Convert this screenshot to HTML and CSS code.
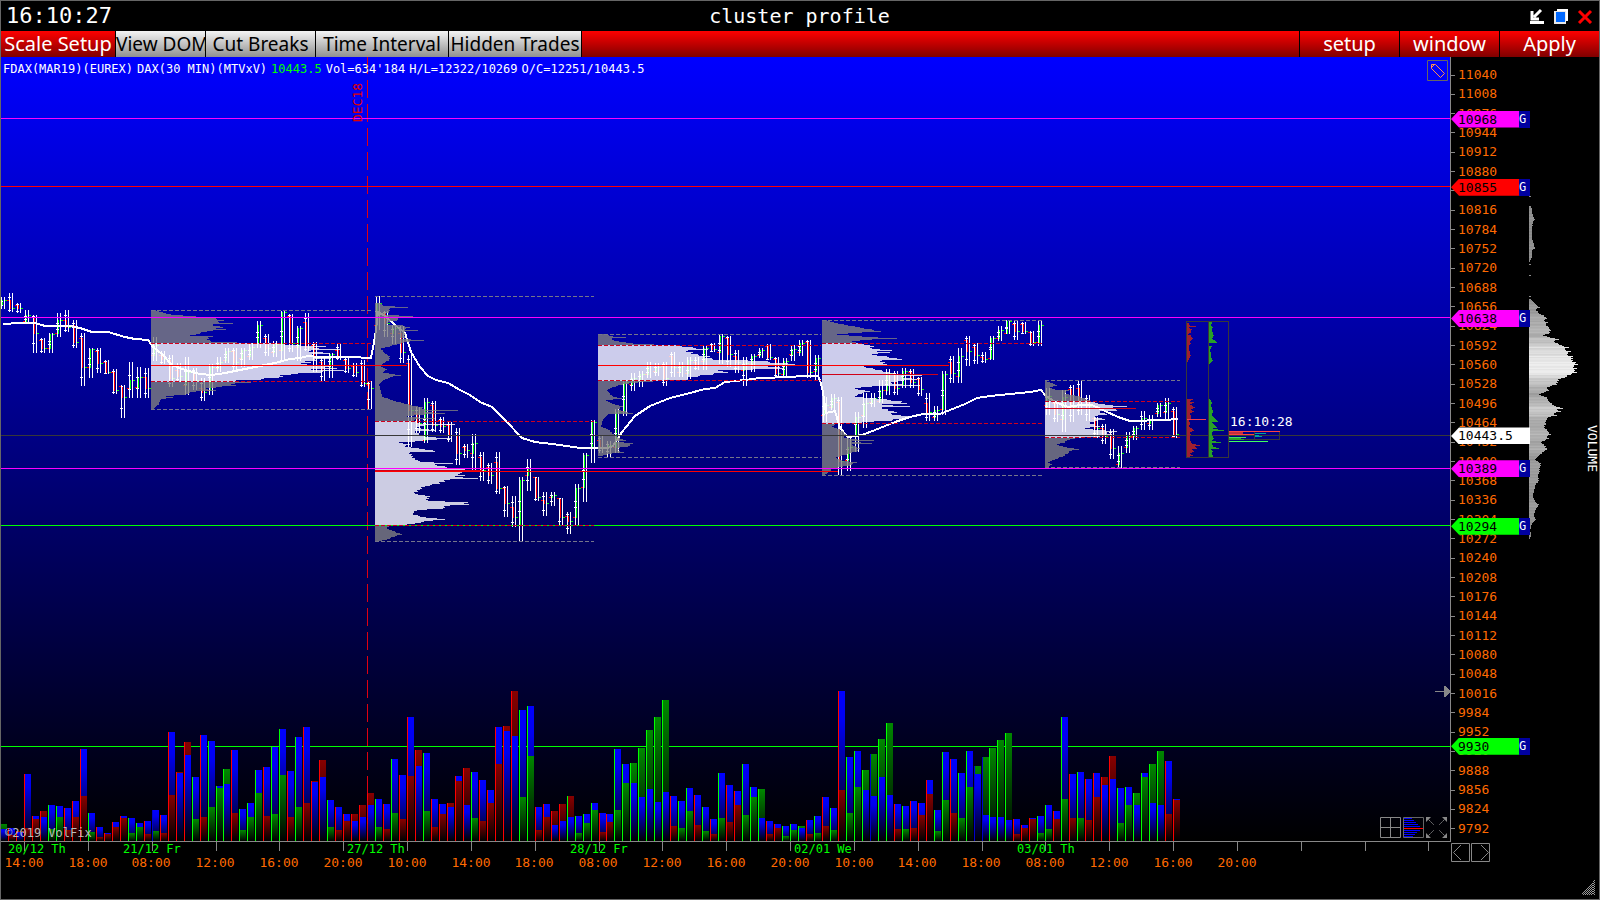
FILE: index.html
```html
<!DOCTYPE html>
<html lang="en">
<head>
<meta charset="utf-8">
<title>cluster profile</title>
<link rel="stylesheet" href="styles.css">
</head>
<body>
<div class="window">
  <header class="titlebar">
    <time class="clock">16:10:27</time>
    <h1 class="title">cluster profile</h1>
    <div class="controls">
      <button class="control" aria-label="Minimize"><svg width="16" height="16" viewBox="0 0 16 16"><path d="M12 2L5 9M3 3v8h7" fill="none" stroke="#fff" stroke-width="3"/><path d="M1 13h14v3H1z" fill="#fff"/></svg></button>
      <button class="control" aria-label="Restore"><svg width="16" height="16" viewBox="0 0 16 16"><path d="M4 1h11v12H4z" fill="#fff"/><path d="M1 3h12v13H1z" fill="#e8e8e8"/><path d="M3 4h9v10H3z" fill="#0068ff"/></svg></button>
      <button class="control" aria-label="Close"><svg width="16" height="16" viewBox="0 0 16 16"><path d="M2 3l12 12M14 3L2 15" fill="none" stroke="#f00" stroke-width="3"/></svg></button>
    </div>
  </header>
  <nav class="toolbar">
    <button class="tool active">Scale Setup</button>
    <button class="tool short">View DOM</button>
    <button class="tool medium">Cut Breaks</button>
    <button class="tool long">Time Interval</button>
    <button class="tool long">Hidden Trades</button>
    <span class="spacer"></span>
    <button class="menu">setup</button>
    <button class="menu">window</button>
    <button class="menu">Apply</button>
  </nav>
  <main class="workspace">
    <section class="chart">
      <svg id="plot" class="plot" viewBox="1 57 1450 842" preserveAspectRatio="none" role="img" aria-label="Price and volume chart">
        <defs>
          <linearGradient id="sky" x1="0" y1="0" x2="0" y2="1"><stop offset="0" stop-color="#00f"/><stop offset="1" stop-color="#000"/></linearGradient>
          <linearGradient id="vb" x1="0" y1="0" x2="0" y2="1"><stop offset="0" stop-color="#00f"/><stop offset=".2" stop-color="#0000f0"/><stop offset="1" stop-color="#000"/></linearGradient>
          <linearGradient id="vr" x1="0" y1="0" x2="0" y2="1"><stop offset="0" stop-color="#880000"/><stop offset="1" stop-color="#000"/></linearGradient>
          <linearGradient id="vg" x1="0" y1="0" x2="0" y2="1"><stop offset="0" stop-color="#008800"/><stop offset="1" stop-color="#000"/></linearGradient>
        </defs>
        <rect x="1" y="57" width="1450" height="784" fill="url(#sky)"/>
        <g id="shapes" shape-rendering="crispEdges"></g>
        <text class="label red" transform="translate(362 122) rotate(-90)">DEC18</text>
        <text class="label white" x="1230" y="426">16:10:28</text>
        <text class="small grey" x="5" y="837">©2019 VolFix</text>
        <g class="small green">
          <text x="8" y="853">20/12 Th</text><text x="123" y="853">21/12 Fr</text><text x="347" y="853">27/12 Th</text>
          <text x="570" y="853">28/12 Fr</text><text x="794" y="853">02/01 We</text><text x="1017" y="853">03/01 Th</text>
        </g>
        <g class="label orange middle">
          <text x="24" y="867">14:00</text><text x="88" y="867">18:00</text><text x="151" y="867">08:00</text><text x="215" y="867">12:00</text>
          <text x="279" y="867">16:00</text><text x="343" y="867">20:00</text><text x="407" y="867">10:00</text><text x="471" y="867">14:00</text>
          <text x="534" y="867">18:00</text><text x="598" y="867">08:00</text><text x="662" y="867">12:00</text><text x="726" y="867">16:00</text>
          <text x="790" y="867">20:00</text><text x="854" y="867">10:00</text><text x="917" y="867">14:00</text><text x="981" y="867">18:00</text>
          <text x="1045" y="867">08:00</text><text x="1109" y="867">12:00</text><text x="1173" y="867">16:00</text><text x="1237" y="867">20:00</text>
        </g>
      </svg>
      <p class="info"><span>FDAX(MAR19)(EUREX)</span><span>DAX(30 MIN)(MTVxV)</span><span class="last">10443.5</span><span>Vol=634'184</span><span>H/L=12322/10269</span><span>O/C=12251/10443.5</span></p>
      <button class="icon draw" aria-label="Draw"><svg width="21" height="21" viewBox="0 0 21 21" fill="none" stroke="#666"><path d="M.5.5h20v20H.5z"/><path d="M4.500 4.500h4l9 9-4 4-9-9zM4.500 7.500l3-3" stroke="#ff9050"/></svg></button>
      <div class="icons">
        <button class="icon" aria-label="Grid"><svg width="21" height="21" viewBox="0 0 21 21" fill="none" stroke="#888"><path d="M.5.5h20v20H.5zM10.500.5v20M.5 10.500h20"/></svg></button>
        <button class="icon" aria-label="Profile"><svg width="21" height="21" viewBox="0 0 21 21" fill="none" stroke="#00f"><path d="M1 1.500h8M1 3.500h10M1 5.500h12M1 7.500h14M1 9.500h16M1 13.500h16M1 15.500h13M1 17.500h11M1 19.500h9"/><path d="M1 11.500h19" stroke="#f00"/><path d="M.5.5h20v20H.5z" stroke="#666"/></svg></button>
        <button class="icon" aria-label="Expand"><svg width="21" height="21" viewBox="0 0 21 21" fill="none" stroke="#888"><path d="M1 1l7 7M20 1l-7 7M1 20l7-7M20 20l-7-7" stroke-dasharray="2 1"/><path d="M0 0h5L0 5zM21 0h-5l5 5zM0 21h5l-5-5zM21 21h-5l5-5z" fill="#888" stroke="none"/></svg></button>
      </div>
    </section>
    <aside class="side">
      <svg id="depth" class="depth" viewBox="1451 57 148 842" preserveAspectRatio="none" shape-rendering="crispEdges" aria-hidden="true"></svg>
      <ul class="scale">
        <li>11040</li><li>11008</li><li>10976</li><li>10944</li><li>10912</li><li>10880</li><li>10848</li><li>10816</li><li>10784</li><li>10752</li>
        <li>10720</li><li>10688</li><li>10656</li><li>10624</li><li>10592</li><li>10560</li><li>10528</li><li>10496</li><li>10464</li><li>10432</li>
        <li>10400</li><li>10368</li><li>10336</li><li>10304</li><li>10272</li><li>10240</li><li>10208</li><li>10176</li><li>10144</li><li>10112</li>
        <li>10080</li><li>10048</li><li>10016</li><li>9984</li><li>9952</li><li>9920</li><li>9888</li><li>9856</li><li>9824</li><li>9792</li>
      </ul>
      <div class="tags">
        <div class="tag magenta" style="--price:10968"><span>10968</span><b>G</b></div>
        <div class="tag scarlet" style="--price:10855"><span>10855</span><b>G</b></div>
        <div class="tag magenta" style="--price:10638"><span>10638</span><b>G</b></div>
        <div class="tag current" style="--price:10443.5"><span>10443.5</span></div>
        <div class="tag magenta" style="--price:10389"><span>10389</span><b>G</b></div>
        <div class="tag lime" style="--price:10294"><span>10294</span><b>G</b></div>
        <div class="tag lime" style="--price:9930"><span>9930</span><b>G</b></div>
      </div>
      <div class="volume">VOLUME</div>
      <div class="pager">
        <button class="icon" aria-label="Back"><svg width="19" height="19" viewBox="0 0 19 19" fill="none" stroke="#888"><path d="M.5.5h18v18H.5zM10 2L2.500 9.500 10 17"/></svg></button>
        <button class="icon" aria-label="Forward"><svg width="19" height="19" viewBox="0 0 19 19" fill="none" stroke="#888"><path d="M.5.5h18v18H.5zM10 2l7.500 7.500L10 17"/></svg></button>
        <svg class="grip" width="15" height="15" viewBox="0 0 15 15" fill="none" stroke="#999"><path d="M14.500 0v15M12.500 3v12M10.500 5v10M8.500 7v8M6.500 9v6M4.500 11v4M2.500 13v2" stroke-dasharray="1 1"/><path d="M13.500 1v14M11.500 4v11M9.500 6v9M7.500 8v7M5.500 10v5M3.500 12v3" stroke-dasharray="1 1"/></svg>
      </div>
    </aside>
  </main>
</div>
<script src="chart.js"></script>
</body>
</html>
```
FILE: styles.css
```css
* { box-sizing: border-box; }
body { margin: 0; background: #000; color: #fff; font-family: "DejaVu Sans Mono", "Liberation Mono", monospace; }
button { margin: 0; padding: 0; border: 0; background: none; color: inherit; font: inherit; }
svg { display: block; }

.window { display: grid; grid-template-rows: 30px 26px 1fr; height: 100vh; border: 1px solid #666; overflow: hidden; }

.titlebar { display: grid; grid-template-columns: 1fr auto 1fr; align-items: center; padding: 0 6px 0 5px; }
.clock { font-size: 22px; line-height: 28px; }
.title { margin: 0; font-size: 20px; font-weight: 400; line-height: 30px; }
.controls { display: flex; justify-content: flex-end; gap: 8px; }

.toolbar { display: flex; gap: 1px; font-family: "Noto Sans", sans-serif; font-size: 19px; line-height: 26px; white-space: nowrap; overflow: hidden; }
.tool { flex: none; width: 114px; color: #000; background: linear-gradient(#f4f4f4, #909090); }
.tool.short { width: 89px; }
.tool.medium { width: 109px; }
.tool.long { width: 132px; }
.tool.active, .spacer, .menu { color: #fff; background: linear-gradient(#f00, #800000); }
.tool.active, .menu { font-size: 20px; }
.spacer { flex: 1; }
.menu { width: 99px; }

.workspace { display: grid; grid-template-columns: 1fr 148px; min-height: 0; }
.chart { position: relative; min-height: 0; }
.plot { width: 100%; height: 100%; }
.info { position: absolute; top: 4px; left: 2px; display: flex; gap: 4px; margin: 0; font-size: 12px; line-height: 16px; white-space: nowrap; }
.last { color: #0f0; }
.draw { position: absolute; top: 3px; right: 3px; }
.icons { position: absolute; right: 4px; bottom: 61px; display: flex; gap: 2px; }

.label { font-size: 13px; }
.small { font-size: 12px; }
.middle { text-anchor: middle; }
.white { fill: #fff; }
.grey { fill: #bbb; }
.red { fill: #e00000; }
.green { fill: #0f0; }
.orange { fill: #ff6a00; }

.side { position: relative; display: grid; grid-template-rows: 1fr 57px; min-height: 0; }
.depth { position: absolute; inset: 0; width: 100%; height: 100%; }
.scale { display: flex; flex-direction: column; justify-content: space-between; margin: 0; padding: 11px 0 6px; list-style: none; color: #ff6a00; font-size: 13px; line-height: 14px; }
.scale li { display: flex; align-items: center; gap: 3px; }
.scale li::before { content: ""; width: 4px; height: 1px; background: #888; }
.tags { position: absolute; inset: 18px 0 70px; }
.tag { position: absolute; left: 0; top: calc((11040 - var(--price)) / 1248 * 100%); display: flex; width: 79px; margin-top: -8px; color: #000; font-size: 13px; line-height: 17px; }
.tag span { flex: 1; padding-left: 7px; background: var(--fill); clip-path: polygon(0 50%, 8px 0, 100% 0, 100% 100%, 8px 100%); }
.tag b { width: 11px; color: #fff; background: #0000a0; font-size: 12px; font-weight: 400; }
.magenta { --fill: #f0f; }
.scarlet { --fill: #f00; }
.lime { --fill: #0f0; }
.current { --fill: #fff; }
.volume { position: absolute; top: 368px; right: 0; writing-mode: vertical-rl; font-size: 13px; line-height: 14px; }
.pager { display: flex; gap: 1px; align-items: flex-start; padding: 1px 4px 4px 0; }
.grip { margin-left: auto; align-self: flex-end; }
```
FILE: chart.js
```js
const NS = "http://www.w3.org/2000/svg";
const shapes = document.getElementById("shapes");
const depth = document.getElementById("depth");

function add(parent, name, attrs) {
  const el = document.createElementNS(NS, name);
  for (const key in attrs) el.setAttribute(key, attrs[key]);
  parent.appendChild(el);
}
const rect = (x, y, width, height, fill, parent = shapes) => add(parent, "rect", { x, y, width, height, fill });
const hline = (x1, x2, y, fill) => rect(x1, y, x2 - x1, 1, fill);
const pairs = text => text.trim().split(/\s+/).map(p => p.split(",").map(Number));

/* Row widths between the listed [y, width] points, one row per pixel. */
function rows(text) {
  const pts = pairs(text), out = [];
  for (let i = 0; i < pts.length; i++) {
    const [y, w] = pts[i];
    const [y2, w2] = pts[i + 1] || [y + 1, w];
    for (let r = y; r < y2; r++) out.push([r, Math.max(1, Math.round(w + (w2 - w) * (r - y) / (y2 - y) - (r - y) % 2 * w * 0.05))]);
  }
  return out;
}
const rowPath = (x, list) => list.map(([y, w]) => `M${x} ${y}h${w}v1h${-w}z`).join("");

/* Volume: edge colour, blue height, second height, optional second colour. */
const volumes = `g12,17 r13,6 r9,10 r67,13 r25,22 r24,30 g36,12 g35,24 r33,11 r40,24 r92,45 g28,9 r14,4 r8,7 r19,14 r25,23 g23,8 g18,14 r20,7 b31,10
r26,8 r109,46 r68,69 r86,99 g64,22 r106,24 g100,34 g55,53 g57,72 r91,28 g32,11 g38,24 g71,48 r74,25 g94,27 g112,66 r70,24 g104,34 r114,38 r59,60
r64,81 g41,14 r34,11 r27,20 r20,27 r24,36 r36,48 g42,14 r37,12 g82,28 r66,22 r124,65 r75,91 g88,30 r42,14 r37,27 r34,38 r65,60 r36,73 g69,23
r61,20 r51,38 r114,77 r110,115 r105,150 g131,44 g135,85 r34,11 r37,24 r16,30 r20,37 g24,45,r g25,8 g27,18 g38,31 r28,9 r27,19 g92,31 g77,58 g58,78
g44,93 g52,111 g39,124 g49,141 r45,15 g40,13 g53,30 r46,16 g34,10 r22,7 g68,23 r56,19 r50,36 g77,26 g54,44 g23,52 r20,7 r17,13 g15,5 g17,11 g13,15
r21,7 g25,8 r44,15 g33,11 r150,51 g84,28 g90,54 g51,71 b45,87 g64,102 g46,118 r37,12 g35,12 r40,13 r38,26 r61,47 g31,10 g89,41 r82,28 g68,23
g90,54 b67,75 b26,84 g24,93 g24,101 g21,108 r22,7 r16,13 r23,22 g25,8 g36,12 r30,22 g124,42 r67,23 g69,23 r62,21 r68,44 r56,64 r62,85 g53,18
g54,36 g36,48 g68,64 g38,77 g36,90 r80,27 r42,41`.trim().split(/\s+/);

/* Candles: left x, high, low, open, close (pixel rows). */
const candles = pairs(`1,297,309,305,300 9,293,312,300,308 17,303,313,305,308 25,310,322,321,315 33,315,353,317,333 41,338,353,340,348 49,333,353,348,334
57,313,337,333,320 65,310,332,320,327 73,320,348,325,342 81,333,386,338,367 89,348,378,367,349 97,348,373,351,363 105,360,374,362,372 113,369,394,372,390
121,385,418,386,397 129,362,398,388,380 137,367,398,387,377 145,368,398,377,388 153,337,361,355,345 161,351,364,355,359 169,355,387,360,378 177,363,382,370,376
185,357,395,385,372 193,368,390,372,380 201,378,401,388,392 209,364,395,390,367 217,357,372,368,362 225,348,363,360,351 233,348,370,351,362 241,348,367,358,350
249,343,360,356,347 257,321,348,343,325 265,334,356,338,348 273,341,357,352,344 281,311,360,350,312 289,314,352,316,343 297,326,361,347,328 305,313,351,322,347
313,342,372,345,358 321,358,381,362,370 329,353,378,368,354 337,343,360,350,356 345,358,373,360,368 353,363,377,366,372 361,360,387,365,383 368,381,409,384,388
376,296,330,325,303 384,311,337,313,323 392,325,344,333,328 400,326,363,333,352 408,355,447,363,410 416,407,433,413,423 424,398,443,440,402 432,401,432,405,425
440,417,433,420,426 448,422,442,425,435 456,428,465,435,453 464,444,458,447,450 472,434,470,453,443 480,452,481,457,470 488,463,484,467,475 496,452,494,462,488
504,486,517,488,503 512,496,527,507,517 519,477,542,525,480 527,459,491,475,468 535,477,501,477,497 543,492,516,500,503 551,492,506,497,495 559,498,525,498,517
567,512,534,516,521 575,484,526,517,488 583,453,502,487,455 591,420,463,447,422 599,436,453,440,447 607,441,457,447,445 615,409,453,447,412 623,380,416,411,382
631,373,391,384,378 639,371,387,380,374 647,362,378,374,365 655,363,376,371,367 663,362,386,366,378 671,352,377,356,367 679,362,377,372,366 687,357,379,373,360
695,357,370,362,365 703,346,370,361,348 711,343,352,345,349 719,334,364,352,336 727,336,367,338,354 735,350,373,356,362 743,357,386,370,363 751,354,372,364,356
759,348,358,355,350 767,344,360,346,357 775,357,377,359,373 783,358,377,374,361 791,345,361,354,349 799,340,356,352,343 807,340,378,342,372 815,355,380,371,358
823,397,422,415,405 831,394,410,407,398 838,397,475,402,461 847,437,471,460,447 855,412,452,436,417 863,393,428,415,403 871,393,407,402,398 879,380,403,401,390
886,369,395,390,373 894,371,395,374,388 902,368,388,384,371 910,369,388,372,382 918,377,396,379,389 926,393,421,403,412 934,406,421,417,410 942,371,415,409,374
950,356,383,362,373 958,348,383,376,356 966,336,366,340,351 974,343,364,347,355 982,352,363,357,359 990,336,360,358,338 998,326,341,338,330 1006,320,334,333,321
1014,321,340,324,331 1022,322,334,324,331 1030,331,346,332,342 1038,320,346,342,325 1046,388,415,405,396 1054,400,422,403,414 1062,390,432,419,397 1070,385,422,389,407
1078,380,415,388,405 1086,395,421,400,406 1094,417,438,418,428 1102,424,444,428,436 1110,429,459,434,448 1118,446,468,464,453 1126,432,453,447,436 1133,426,440,436,428
1141,411,430,420,418 1149,415,430,423,419 1157,403,417,413,405 1165,398,419,412,403 1173,407,438,411,434`);

const vwap = `3,324 20,323 35,323 45,326 70,326 80,328 92,332 108,332 125,337 135,339 148,340 153,347 162,354 172,365 185,370 200,374 212,375 225,373 235,371 255,367
275,363 290,359 300,358 308,356 320,357 350,357 371,358 373,348 376,330 378,312 385,316 395,325 405,333 411,352 420,367 428,376 436,380 448,383 460,390 470,395
480,402 492,407 505,420 522,438 535,442 560,445 580,448 608,448 613,446 622,432 635,416 650,406 670,398 690,393 705,389 715,388 725,382 745,380 760,378 790,377
803,376 818,376 820,380 823,392 826,413 835,411 840,428 848,437 855,436 862,435 875,430 895,422 910,417 923,414 940,414 950,410 965,404 977,398 990,396 1010,394
1030,392 1041,390 1045,395 1055,402 1068,407 1080,405 1092,405 1105,411 1118,417 1130,421 1165,420 1178,419`;

/* Session profiles: x, right end, range, value area, row widths. */
const profiles = [
  { x: 151, end: 373, top: 310, bottom: 409, va: [343, 381], data: `310,5 312,12 314,20 316,45 318,65 320,73 322,68 323,82 324,62 327,72 328,65 329,75 331,56 334,45 335,39 336,62 338,58 341,60 342,86 343,130 345,150 346,175 347,162 349,190 350,160 353,178 355,162 358,180 360,165 362,160 364,156 366,180 368,186 369,160 370,193 372,170 374,140 377,128 379,110 380,85 382,100 383,84 385,85 388,55 390,65 391,45 394,35 396,15 397,22 399,10 404,8 407,4 409,2` },
  { x: 375, end: 594, top: 296, bottom: 541, va: [421, 525], data: `303,6 305,8 307,33 308,15 312,14 314,10 316,38 317,25 320,22 321,15 324,12 325,28 327,35 329,30 330,43 331,30 334,30 337,30 338,25 340,49 341,35 344,22 346,15 348,6 352,9 356,15 360,14 363,8 366,6 369,12 372,8 375,26 376,18 380,8 384,4 390,6 396,7 400,18 404,34 407,48 409,50 410,83 411,50 413,70 414,50 416,32 418,60 419,40 423,45 424,80 425,50 427,42 430,60 431,40 436,50 438,77 439,62 441,40 442,24 444,35 446,30 450,58 451,60 452,35 458,40 461,45 463,78 464,60 466,70 468,80 470,108 471,98 473,85 475,90 476,80 478,103 479,75 483,65 486,50 489,45 493,40 496,55 500,53 502,93 504,94 505,75 508,68 510,42 513,38 516,45 519,70 520,58 523,40 525,28 526,14 528,12 531,20 534,27 536,20 539,12 541,3` },
  { x: 598, end: 821, top: 334, bottom: 457, va: [345, 380], data: `334,8 336,15 337,28 338,14 340,16 342,28 343,35 345,80 347,95 349,110 350,90 354,100 356,112 359,115 360,150 361,170 363,190 364,197 365,176 368,185 369,155 370,120 371,125 372,130 374,115 376,100 378,90 379,90 380,70 381,55 382,40 384,25 386,18 388,12 390,9 393,12 396,15 398,24 400,8 403,14 406,25 409,20 413,35 414,10 418,6 422,4 426,3 430,12 434,16 437,20 440,28 441,18 443,35 446,30 447,22 450,20 452,26 453,14 455,5` },
  { x: 822, end: 1042, top: 320, bottom: 475, va: [343, 423], data: `320,5 322,12 324,22 327,38 329,50 331,59 332,40 334,15 336,40 338,75 339,50 341,30 343,40 346,52 348,50 350,70 351,55 352,68 354,50 356,65 359,80 360,60 364,65 366,42 370,60 373,72 375,100 376,80 379,95 381,75 383,70 385,98 386,50 388,33 391,48 393,40 396,33 399,65 401,80 403,85 404,60 406,88 407,60 412,75 414,70 416,95 418,80 420,70 422,40 423,15 426,10 429,18 432,22 435,25 437,22 439,35 440,52 441,30 443,50 444,30 448,38 451,35 454,25 457,14 460,20 462,35 465,28 468,10 471,8 474,3` },
  { x: 1045, end: 1180, top: 380, bottom: 467, va: [401, 437], data: `381,2 383,8 385,12 387,5 389,10 390,24 393,20 396,35 398,40 400,45 402,50 404,60 406,82 407,68 410,72 411,55 414,62 416,50 419,60 422,45 424,50 426,55 428,40 430,60 431,72 432,62 435,70 436,55 438,30 440,22 442,20 444,12 446,18 449,34 450,27 453,23 456,18 459,10 462,3 464,7 467,3` }
];

/* Axes and the volume reference line */
hline(1, 1450, 746, "#00ff00");
hline(1, 1451, 841, "#888");
rect(1450, 57, 1, 785, "#888");
for (let i = 0; i < 23; i++) rect(Math.round(24 + i * 63.84), 841, 1, 10, "#888");

/* Volume bars */
const step = (1173 - 24) / (volumes.length - 4);
volumes.forEach((item, i) => {
  const edge = item[0];
  const [blue, other, tint] = item.slice(1).split(",");
  const x = Math.round(24 + (i - 3) * step);
  const bars = [[+blue, "url(#vb)"], [+other, (tint || edge) === "r" ? "url(#vr)" : "url(#vg)"]].sort((a, b) => b[0] - a[0]);
  bars.forEach(([h, fill]) => rect(x, 841 - h, 7, h, fill));
  rect(x, 841 - bars[0][0], 1, bars[0][0], { r: "#f00", g: "#0f0", b: "#00c" }[edge]);
});

add(shapes, "path", { d: "M367.500 56V841", stroke: "#e00010", "stroke-dasharray": "18 6", fill: "none" });

/* Candles and average */
for (const [x, high, low, open, close] of candles) {
  const up = close < open, tone = up ? "#0f0" : "#f00";
  rect(x, high, 1, low - high, "#fff");
  rect(x + 3, high, 1, low - high, "#fff");
  rect(x + 1, Math.min(open, close), 1, Math.abs(open - close) + 1, tone);
  rect(x - 1, Math.round((high + open) / 2), 3, 1, "#fff");
  rect(x - 1, Math.round((low + close) / 2), 3, 1, "#fff");
  rect(x - 2, open, 2, 1, "#f00");
  rect(x + 4, close, 2, 1, "#0f0");
}
add(shapes, "polyline", { points: vwap, fill: "none", stroke: "#fff", "stroke-width": 2 });

/* Profiles */
for (const p of profiles) {
  const list = rows(p.data);
  const inside = ([y]) => y >= p.va[0] && y <= p.va[1];
  add(shapes, "path", { d: rowPath(p.x, list.filter(inside)), fill: "#fff", "fill-opacity": 0.8 });
  add(shapes, "path", { d: rowPath(p.x, list.filter(r => !inside(r))), fill: "#808080", "fill-opacity": 0.8 });
}

/* Levels */
for (const y of [118, 317, 468]) hline(1, 1450, y, "#f0f");
hline(1, 1450, 186, "#f00");
hline(1, 1450, 525, "#0f0");
hline(1, 1450, 435, "#383838");
for (const p of profiles) {
  for (const y of [p.top, p.bottom]) add(shapes, "path", { d: `M${p.x} ${y + 0.5}H${p.end}`, stroke: "#75758a", "stroke-dasharray": "4 2" });
  for (const y of p.va) add(shapes, "path", { d: `M${p.x} ${y + 0.5}H${p.end}`, stroke: "#d0001c", "stroke-dasharray": "4 2" });
}
hline(151, 407, 365, "#f00");
hline(375, 838, 471, "#f00");
hline(375, 482, 470, "#d00018");
hline(598, 949, 365, "#f00");
hline(822, 938, 374, "#d00018");
hline(1045, 1136, 408, "#d00018");

/* Order book */
const redBook = rows("323,2 325,3 326,9 327,2 329,5 332,4 334,0 335,4 338,6 341,3 343,4 345,2 349,2 353,3 355,4 358,2 361,1").concat(
  rows("399,6 401,3 402,7 404,3 407,8 409,4 411,7 413,3 415,4 418,4 419,19 420,2 423,3 426,2 428,5 430,7 432,3 434,4 437,3 440,3 443,5 445,13 446,8 448,10 449,5 451,7 453,3 455,6 456,3"));
const greenBook = rows("322,3 325,2 327,4 330,3 333,4 335,5 338,3 340,6 342,8").concat(
  rows("346,3 348,2 350,1 353,2 357,2 360,4 363,1"), rows("399,1 402,3 405,2 408,3 412,4 415,3 417,5 421,9 422,3 425,6 427,8 428,4 430,15 431,4 434,3 438,5 440,3 442,12 443,3 446,4 448,10 449,2 451,4 453,3 456,4"));
add(shapes, "path", { d: rowPath(1187, redBook), fill: "#a02030" });
add(shapes, "path", { d: rowPath(1209, greenBook), fill: "#28a028" });
hline(1187, 1206, 419, "#f04050");
for (const [x, w] of [[1186, 23], [1208, 21]]) add(shapes, "rect", { x: x + 0.5, y: 321.5, width: w - 1, height: 136, fill: "none", stroke: "#383838" });
add(shapes, "rect", { x: 1229.5, y: 431.5, width: 50, height: 8, fill: "none", stroke: "#383838" });
rect(1254, 431, 1, 8, "#383838");
hline(1229, 1280, 431, "#ff4040");
rect(1229, 432, 14, 3, "#c03040");
hline(1229, 1254, 434, "#ff4040");
hline(1255, 1266, 433, "#00a0a0");
rect(1255, 435, 4, 1, "#00a0a0");
hline(1255, 1262, 436, "#00a0a0");
hline(1229, 1246, 437, "#40e060");
rect(1229, 438, 12, 1, "#28a028");
hline(1229, 1244, 439, "#28a028");
hline(1229, 1268, 441, "#40ff60");
add(shapes, "path", { d: "M1435 691h9v-5h1l5 5v1l-5 5h-1v-5h-9z", fill: "#888" });

/* Total volume */
const total = rows("206,2 210,3 215,4 219,6 221,4 230,3 236,3 241,4 248,6 250,3 257,3 261,1").concat(
  [[192, 1], [196, 2], [264, 2], [275, 2], [296, 2]],
  rows("299,2 303,6 305,8 307,11 309,7 313,10 315,15 318,18 320,15 322,19 324,17 327,20 330,22 333,20 335,14 336,18 339,30 341,25 343,29 345,33 347,40 349,36 351,42 354,38 356,44 360,44 362,47 364,49 366,45 368,48 370,46 372,48 374,42 377,36 378,32 380,30 384,28 387,18 390,20 392,15 394,10 397,18 401,20 403,23 405,25 408,34 409,28 411,32 413,25 415,28 417,19 421,17 424,17 427,15 429,18 432,20 434,22 436,18 438,20 442,12 446,17 449,18 451,15 455,10 459,6 461,9 463,12 467,11 471,11 476,9 480,10 484,7 490,5 496,4 502,7 504,10 507,8 510,6 515,5 519,7 522,4 526,2 530,1 534,2 538,1"));
for (const [y, w] of total) {
  const tone = Math.min(238, 130 + Math.round(w * 2.2) + y % 3 * 4);
  rect(1529, y, w, 1, `rgb(${tone},${tone},${tone})`, depth);
}
```
